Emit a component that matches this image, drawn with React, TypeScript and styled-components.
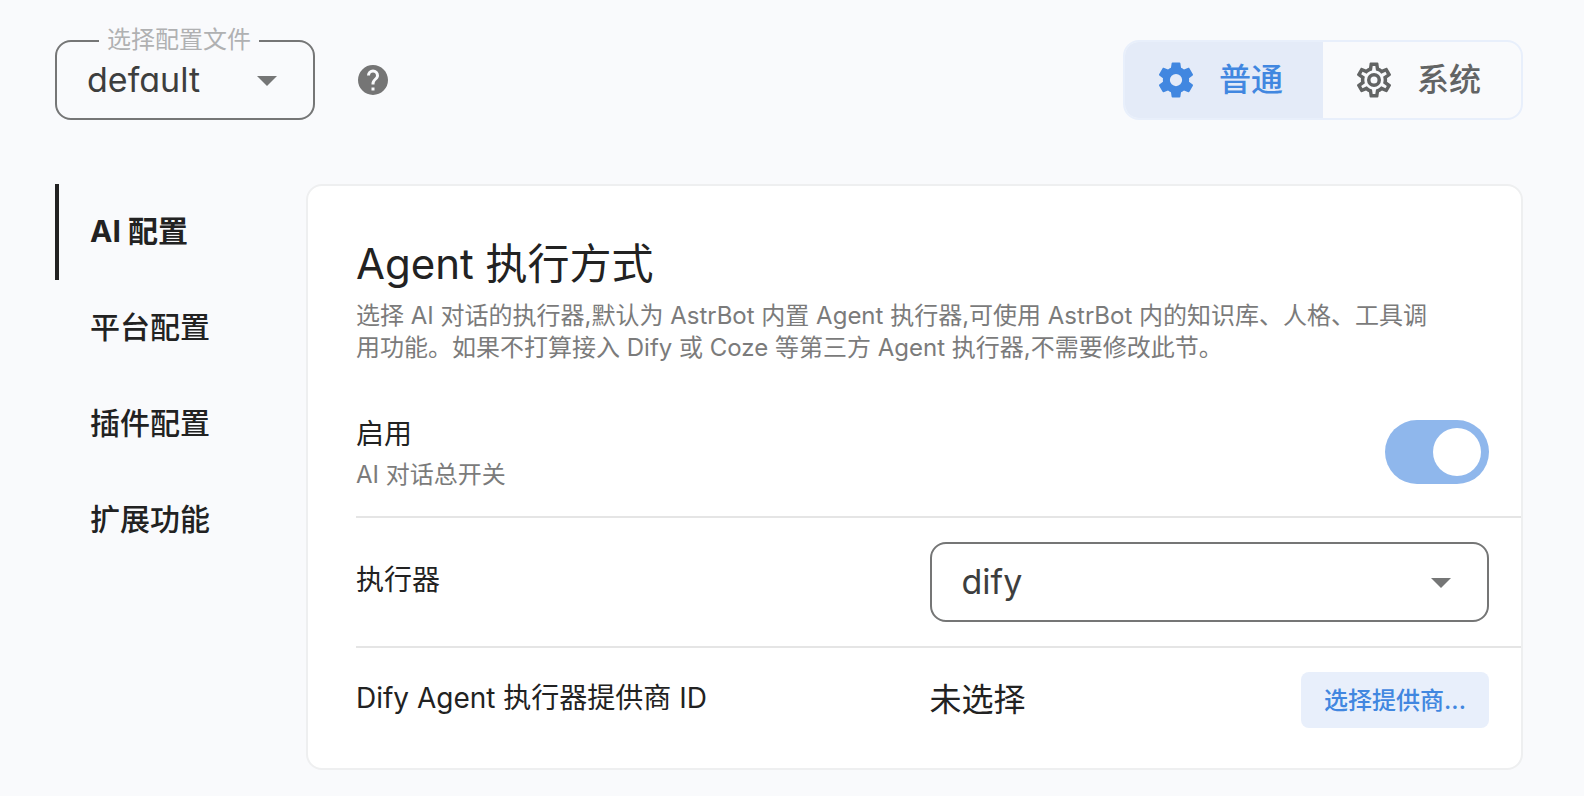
import React, { useState } from 'react';
import styled, { createGlobalStyle } from 'styled-components';

const GlobalStyle = createGlobalStyle`
  *, *::before, *::after { box-sizing: border-box; }
  body {
    margin: 0;
    background: #f9fafc;
    color: #222222;
    font-family: Inter, "Noto Sans CJK SC", sans-serif;
    font-feature-settings: "cv11";
  }
  button, select { font: inherit; font-feature-settings: inherit; }
`;

const Page = styled.div`
  padding: 40px 61px 24px 55px;
`;

const Toolbar = styled.header`
  display: flex;
  align-items: center;
  justify-content: space-between;
  margin-bottom: 64px;
`;

const ToolbarStart = styled.div`
  display: flex;
  align-items: center;
  gap: 40px;
`;

const Field = styled.div<{ $width: string }>`
  position: relative;
  width: ${(p) => p.$width};
`;

const FieldLabel = styled.label`
  position: absolute;
  top: -16px;
  left: 44px;
  padding: 0 8px;
  background: #f9fafc;
  color: #b0b1b2;
  font-size: 24px;
  line-height: 32px;
  white-space: nowrap;
`;

const Select = styled.select`
  display: block;
  width: 100%;
  height: 80px;
  padding: 0 72px 0 30px;
  appearance: none;
  border: 2px solid #757676;
  border-radius: 16px;
  background: transparent;
  color: #3d3e3e;
  font-size: 34px;
  line-height: 48px;
`;

const Caret = styled.svg`
  position: absolute;
  top: 36px;
  right: 38px;
  width: 20px;
  height: 10px;
  fill: #757676;
  pointer-events: none;
`;

const HelpButton = styled.button`
  display: flex;
  padding: 0;
  border: 0;
  background: none;
  color: #757575;
  cursor: pointer;
`;

const Icon = styled.svg<{ $size: number }>`
  width: ${(p) => p.$size}px;
  height: ${(p) => p.$size}px;
  fill: currentColor;
`;

const ToggleGroup = styled.div`
  display: flex;
  width: 400px;
  height: 80px;
  border: 2px solid #e8effb;
  border-radius: 16px;
  overflow: hidden;
`;

const ToggleButton = styled.button<{ $active: boolean }>`
  display: flex;
  flex: 1;
  align-items: center;
  gap: 22px;
  padding: 0 0 0 30px;
  border: 0;
  background: ${(p) => (p.$active ? '#e4ebf8' : 'transparent')};
  color: ${(p) => (p.$active ? '#4187e0' : '#626464')};
  font-size: 32px;
  font-weight: 500;
  line-height: 48px;
  cursor: pointer;
`;

const Content = styled.div`
  display: flex;
  align-items: flex-start;
`;

const Tabs = styled.nav`
  display: flex;
  flex: 0 0 251px;
  flex-direction: column;
`;

const Tab = styled.button<{ $active: boolean }>`
  height: 96px;
  padding: 0 0 2px 31px;
  border: 0;
  border-left: 4px solid ${(p) => (p.$active ? '#222222' : 'transparent')};
  background: none;
  color: #222222;
  font-size: 30px;
  font-weight: ${(p) => (p.$active ? 700 : 500)};
  line-height: 48px;
  text-align: left;
  cursor: pointer;
`;

const Card = styled.section`
  flex: 1;
  min-width: 0;
  padding: 46px 0 16px 48px;
  border: 2px solid #eeeff0;
  border-radius: 16px;
  background: #ffffff;
`;

const CardHeader = styled.div`
  padding-right: 80px;
  margin-bottom: 24px;
`;

const Title = styled.h2`
  margin: 0 0 4px;
  font-size: 42px;
  font-weight: 400;
  line-height: 64px;
`;

const Description = styled.p`
  margin: 0;
  color: #7b7b7b;
  font-size: 24px;
  line-height: 32px;
`;

const Row = styled.div`
  display: grid;
  grid-template-columns: 1fr 1fr;
  column-gap: 14px;
  align-items: center;
  padding: 24px 32px 24px 0;

  & + & { border-top: 2px solid #e5e5e5; }
`;

const RowText = styled.div`
  display: flex;
  flex-direction: column;
  gap: 2px;
`;

const RowLabel = styled.label`
  padding-bottom: 4px;
  font-size: 28px;
  line-height: 40px;
`;

const RowHint = styled.span`
  color: #7b7b7b;
  font-size: 24px;
  line-height: 30px;
`;

const SwitchInput = styled.input`
  display: flex;
  align-items: center;
  justify-self: end;
  width: 104px;
  height: 64px;
  margin: 8px 0;
  padding: 8px;
  appearance: none;
  border-radius: 32px;
  background: #c4c4c4;
  cursor: pointer;

  &::before {
    content: "";
    width: 48px;
    height: 48px;
    border-radius: 50%;
    background: #ffffff;
  }

  &:checked {
    justify-content: flex-end;
    background: #8fb7ec;
  }
`;

const Provider = styled.div`
  display: flex;
  align-items: center;
  justify-content: space-between;
`;

const ProviderValue = styled.span`
  font-size: 32px;
  line-height: 48px;
`;

const ProviderButton = styled.button`
  width: 188px;
  height: 56px;
  padding: 0 0 4px;
  border: 0;
  border-radius: 8px;
  background: #e8effb;
  color: #4187e0;
  font-size: 24px;
  font-weight: 500;
  cursor: pointer;
`;

const HELP =
  'M15.07,11.25L14.17,12.17C13.45,12.89 13,13.5 13,15H11V14.5C11,13.39 11.45,12.39 12.17,11.67L13.41,10.41C13.78,10.05 14,9.55 14,9C14,7.89 13.1,7 12,7A2,2 0 0,0 10,9H8A4,4 0 0,1 12,5A4,4 0 0,1 16,9C16,9.88 15.64,10.67 15.07,11.25M13,19H11V17H13M12,2A10,10 0 0,0 2,12A10,10 0 0,0 12,22A10,10 0 0,0 22,12C22,6.47 17.5,2 12,2Z';
const COG =
  'M12,15.5A3.5,3.5 0 0,1 8.5,12A3.5,3.5 0 0,1 12,8.5A3.5,3.5 0 0,1 15.5,12A3.5,3.5 0 0,1 12,15.5M19.43,12.97C19.47,12.65 19.5,12.33 19.5,12C19.5,11.67 19.47,11.34 19.43,11L21.54,9.37C21.73,9.22 21.78,8.95 21.66,8.73L19.66,5.27C19.54,5.05 19.27,4.96 19.05,5.05L16.56,6.05C16.04,5.66 15.5,5.32 14.87,5.07L14.5,2.42C14.46,2.18 14.25,2 14,2H10C9.75,2 9.54,2.18 9.5,2.42L9.13,5.07C8.5,5.32 7.96,5.66 7.44,6.05L4.95,5.05C4.73,4.96 4.46,5.05 4.34,5.27L2.34,8.73C2.21,8.95 2.27,9.22 2.46,9.37L4.57,11C4.53,11.34 4.5,11.67 4.5,12C4.5,12.33 4.53,12.65 4.57,12.97L2.46,14.63C2.27,14.78 2.21,15.05 2.34,15.27L4.34,18.73C4.46,18.95 4.73,19.03 4.95,18.95L7.44,17.94C7.96,18.34 8.5,18.68 9.13,18.93L9.5,21.58C9.54,21.82 9.75,22 10,22H14C14.25,22 14.46,21.82 14.5,21.58L14.87,18.93C15.5,18.67 16.04,18.34 16.56,17.94L19.05,18.95C19.27,19.03 19.54,18.95 19.66,18.73L21.66,15.27C21.78,15.05 21.73,14.78 21.54,14.63L19.43,12.97Z';
const COG_OUTLINE =
  'M12,8A4,4 0 0,1 16,12A4,4 0 0,1 12,16A4,4 0 0,1 8,12A4,4 0 0,1 12,8M12,10A2,2 0 0,0 10,12A2,2 0 0,0 12,14A2,2 0 0,0 14,12A2,2 0 0,0 12,10M10,22C9.75,22 9.54,21.82 9.5,21.58L9.13,18.93C8.5,18.68 7.96,18.34 7.44,17.94L4.95,18.95C4.73,19.03 4.46,18.95 4.34,18.73L2.34,15.27C2.21,15.05 2.27,14.78 2.46,14.63L4.57,12.97L4.5,12L4.57,11L2.46,9.37C2.27,9.22 2.21,8.95 2.34,8.73L4.34,5.27C4.46,5.05 4.73,4.96 4.95,5.05L7.44,6.05C7.96,5.66 8.5,5.32 9.13,5.07L9.5,2.42C9.54,2.18 9.75,2 10,2H14C14.25,2 14.46,2.18 14.5,2.42L14.87,5.07C15.5,5.32 16.04,5.66 16.56,6.05L19.05,5.05C19.27,4.96 19.54,5.05 19.66,5.27L21.66,8.73C21.79,8.95 21.73,9.22 21.54,9.37L19.43,11L19.5,12L19.43,13L21.54,14.63C21.73,14.78 21.79,15.05 21.66,15.27L19.66,18.73C19.54,18.95 19.27,19.04 19.05,18.95L16.56,17.95C16.04,18.34 15.5,18.68 14.87,18.93L14.5,21.58C14.46,21.82 14.25,22 14,22H10M11.25,4L10.88,6.61C9.68,6.86 8.62,7.5 7.85,8.39L5.44,7.35L4.69,8.65L6.8,10.2C6.4,11.37 6.4,12.64 6.8,13.8L4.68,15.36L5.43,16.66L7.86,15.62C8.63,16.5 9.68,17.14 10.87,17.38L11.24,20H12.76L13.13,17.39C14.32,17.14 15.37,16.5 16.14,15.62L18.57,16.66L19.32,15.36L17.2,13.81C17.6,12.64 17.6,11.37 17.2,10.2L19.31,8.65L18.56,7.35L16.15,8.39C15.38,7.5 14.32,6.86 13.12,6.62L12.75,4H11.25Z';

const MODES = [
  { name: '普通', icon: COG },
  { name: '系统', icon: COG_OUTLINE },
];

const SECTIONS = ['AI 配置', '平台配置', '插件配置', '扩展功能'];

function CaretIcon() {
  return (
    <Caret viewBox="0 0 20 10" aria-hidden="true">
      <path d="M0 0H20L10 10Z" />
    </Caret>
  );
}

export default function App() {
  const [mode, setMode] = useState('普通');
  const [section, setSection] = useState('AI 配置');
  const [enabled, setEnabled] = useState(true);

  return (
    <>
      <GlobalStyle />
      <Page>
        <Toolbar>
          <ToolbarStart>
            <Field $width="260px">
              <Select id="profile" defaultValue="default">
                <option value="default">default</option>
              </Select>
              <FieldLabel htmlFor="profile">选择配置文件</FieldLabel>
              <CaretIcon />
            </Field>
            <HelpButton type="button" aria-label="帮助">
              <Icon $size={36} viewBox="0 0 24 24" aria-hidden="true">
                <path d={HELP} />
              </Icon>
            </HelpButton>
          </ToolbarStart>
          <ToggleGroup>
            {MODES.map((m) => (
              <ToggleButton
                key={m.name}
                type="button"
                $active={mode === m.name}
                aria-pressed={mode === m.name}
                onClick={() => setMode(m.name)}
              >
                <Icon $size={42} viewBox="0 0 24 24" aria-hidden="true">
                  <path d={m.icon} />
                </Icon>
                {m.name}
              </ToggleButton>
            ))}
          </ToggleGroup>
        </Toolbar>

        <Content>
          <Tabs>
            {SECTIONS.map((name) => (
              <Tab
                key={name}
                type="button"
                $active={section === name}
                onClick={() => setSection(name)}
              >
                {name}
              </Tab>
            ))}
          </Tabs>

          <Card>
            <CardHeader>
              <Title>Agent 执行方式</Title>
              <Description>
                选择 AI 对话的执行器,默认为 AstrBot 内置 Agent 执行器,可使用 AstrBot
                内的知识库、人格、工具调用功能。如果不打算接入 Dify 或 Coze 等第三方 Agent
                执行器,不需要修改此节。
              </Description>
            </CardHeader>

            <Row>
              <RowText>
                <RowLabel htmlFor="enabled">启用</RowLabel>
                <RowHint>AI 对话总开关</RowHint>
              </RowText>
              <SwitchInput
                id="enabled"
                type="checkbox"
                role="switch"
                checked={enabled}
                onChange={(e) => setEnabled(e.target.checked)}
              />
            </Row>

            <Row>
              <RowText>
                <RowLabel htmlFor="runner">执行器</RowLabel>
              </RowText>
              <Field $width="100%">
                <Select id="runner" defaultValue="dify">
                  <option value="dify">dify</option>
                </Select>
                <CaretIcon />
              </Field>
            </Row>

            <Row>
              <RowText>
                <RowLabel htmlFor="provider">Dify Agent 执行器提供商 ID</RowLabel>
              </RowText>
              <Provider>
                <ProviderValue>未选择</ProviderValue>
                <ProviderButton id="provider" type="button">
                  选择提供商...
                </ProviderButton>
              </Provider>
            </Row>
          </Card>
        </Content>
      </Page>
    </>
  );
}
